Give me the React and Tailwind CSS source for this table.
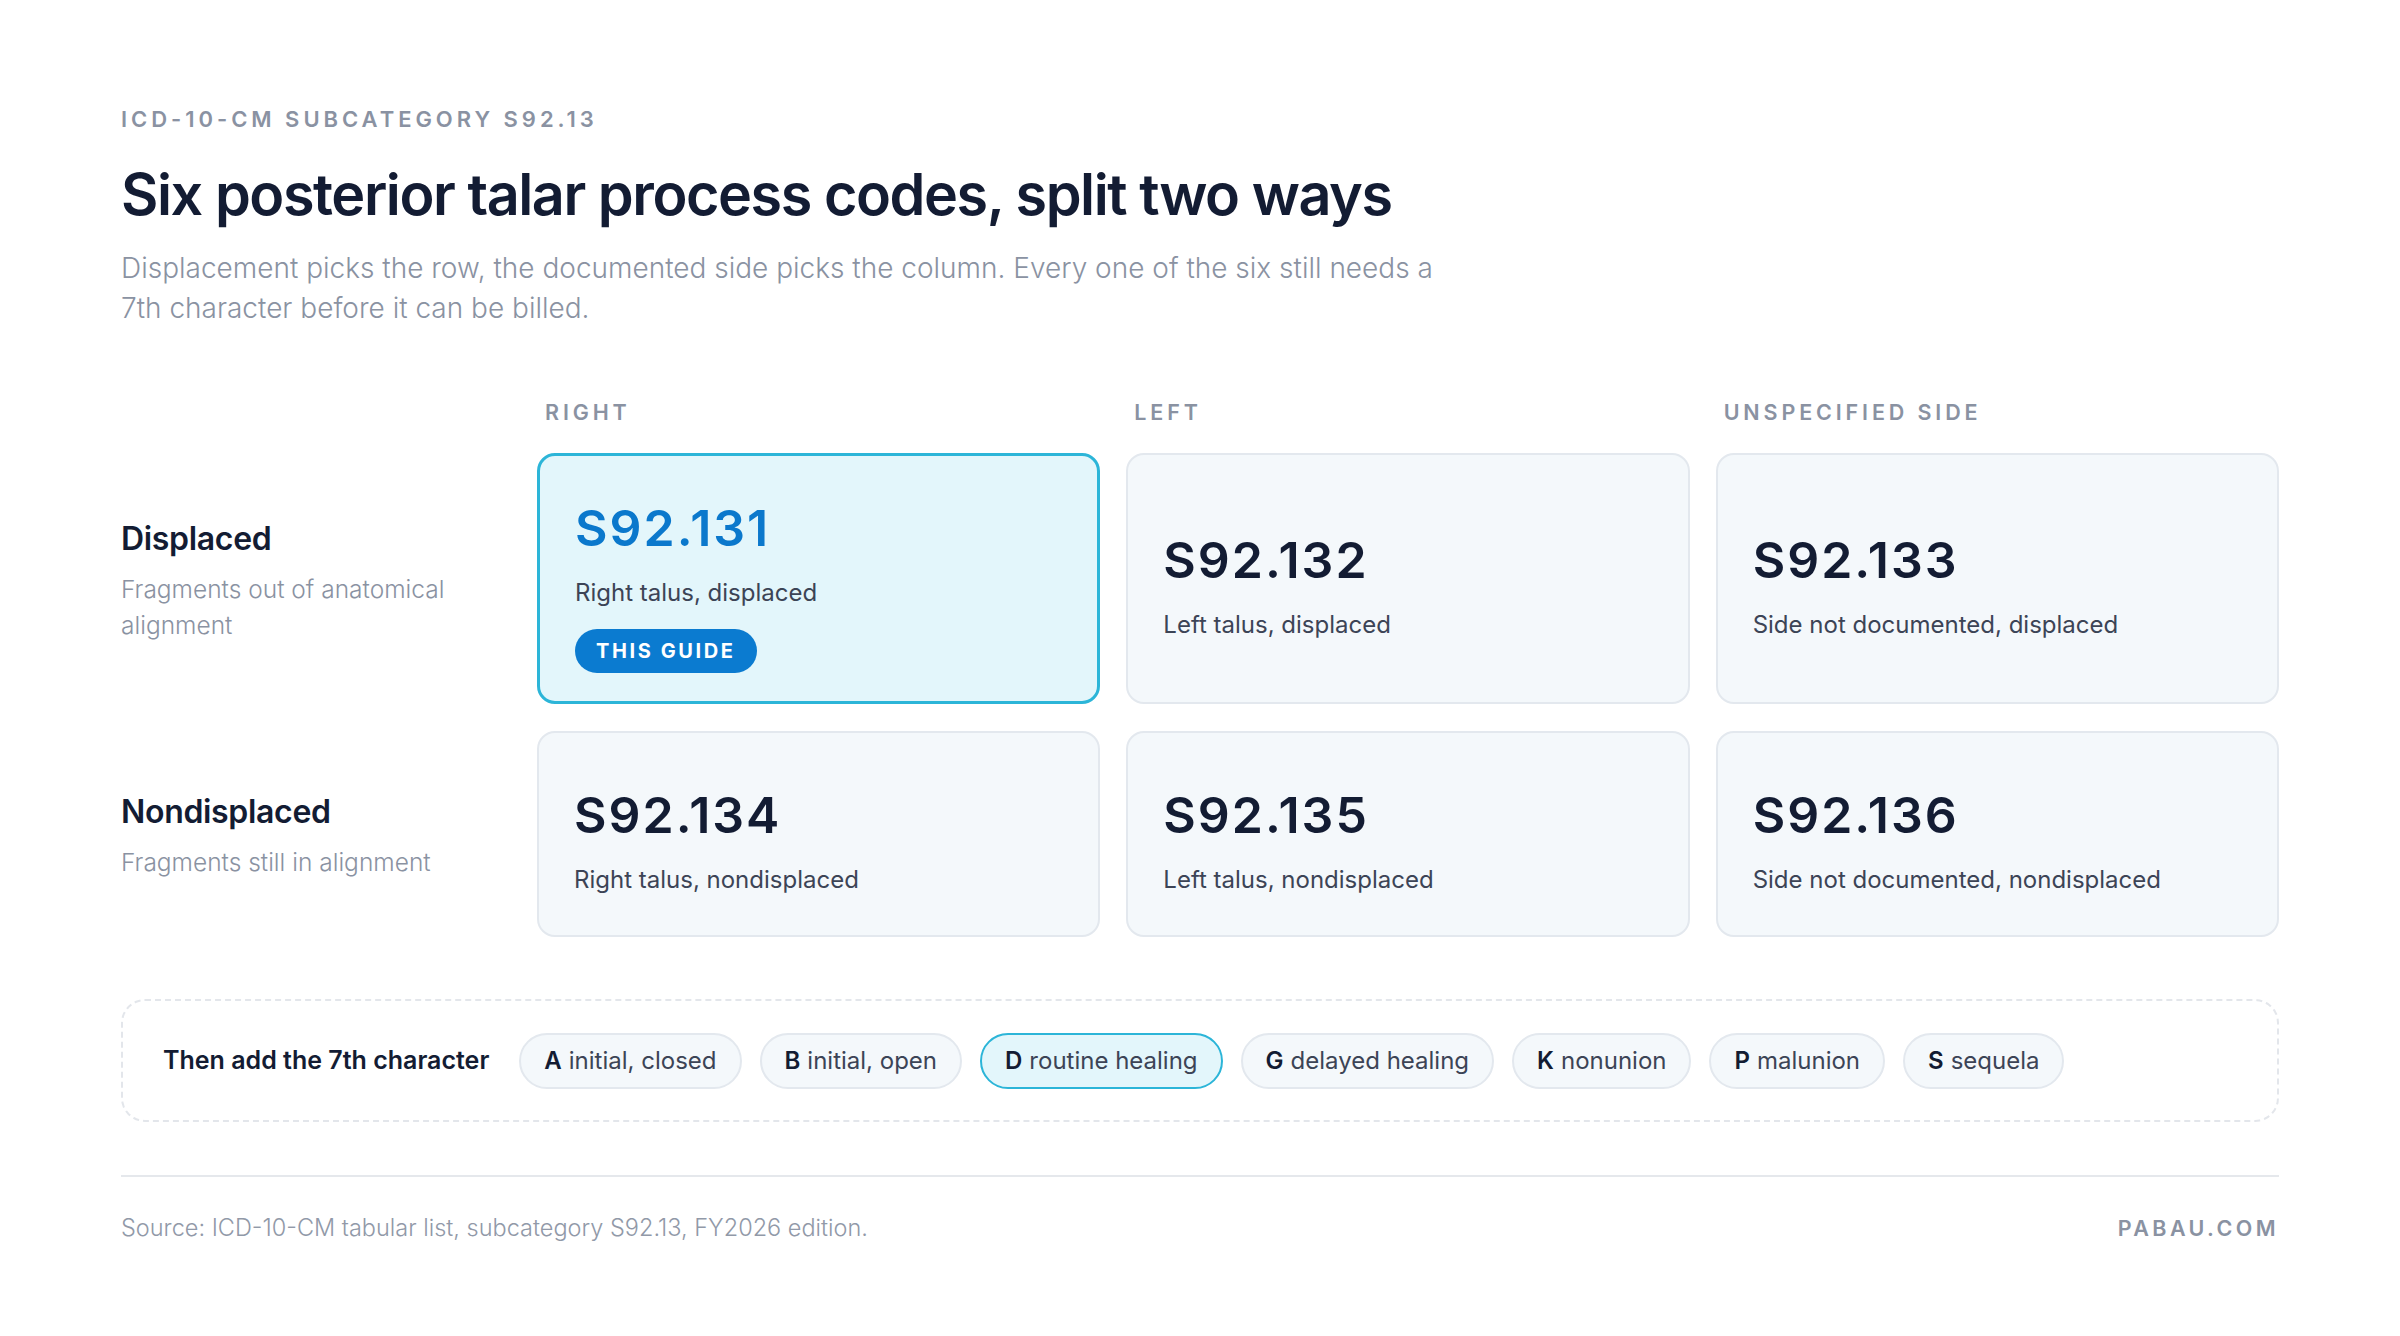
const rows = [
  {
    title: "Displaced",
    note: "Fragments out of anatomical alignment",
    height: "h-[251px]",
    cards: [
      { code: "S92.131", desc: "Right talus, displaced", current: true },
      { code: "S92.132", desc: "Left talus, displaced" },
      { code: "S92.133", desc: "Side not documented, displaced" },
    ],
  },
  {
    title: "Nondisplaced",
    note: "Fragments still in alignment",
    height: "h-[206px]",
    cards: [
      { code: "S92.134", desc: "Right talus, nondisplaced" },
      { code: "S92.135", desc: "Left talus, nondisplaced" },
      { code: "S92.136", desc: "Side not documented, nondisplaced" },
    ],
  },
];

const sevenths = [
  ["A", "initial, closed"],
  ["B", "initial, open"],
  ["D", "routine healing", true],
  ["G", "delayed healing"],
  ["K", "nonunion"],
  ["P", "malunion"],
  ["S", "sequela"],
];

function CodeCard({ code, desc, current, height }) {
  return (
    <div
      className={`${height} flex flex-col justify-center rounded-[18px] px-[35px] pt-[14px] ${
        current
          ? "border-[3px] border-[#2cb5d8] bg-[#e3f6fb]"
          : "border-2 border-[#e3e8ee] bg-[#f4f8fb]"
      }`}
    >
      <div
        className={`text-[50px] font-semibold leading-[58px] tracking-[0.04em] ${
          current ? "text-[#0b78cc]" : "text-[#131c33]"
        }`}
      >
        {code}
      </div>
      <div className="mt-5 text-[24px] leading-[32px] text-[#3c4456]">{desc}</div>
      {current && (
        <div className="mt-5">
          <span className="inline-flex h-[44px] items-center rounded-full bg-[#0b7bd0] px-[21px] text-[20px] font-bold tracking-[0.13em] text-white">
            THIS GUIDE
          </span>
        </div>
      )}
    </div>
  );
}

export default function App() {
  return (
    <div className="min-h-screen bg-white px-[121px] pt-[105px] font-['Inter',sans-serif] text-[#131c33]">
      <p className="text-[22px] font-semibold leading-[28px] tracking-[0.18em] text-[#8a92a2]">
        ICD-10-CM SUBCATEGORY S92.13
      </p>
      <h1 className="mt-[30px] text-[57.5px] font-semibold leading-[62px] tracking-[-0.025em]">
        Six posterior talar process codes, split two ways
      </h1>
      <p className="mt-[23px] max-w-[1345px] text-[28px] font-light leading-[40px] text-[#8a92a2]">
        Displacement picks the row, the documented side picks the column. Every one of the six
        still needs a 7th character before it can be billed.
      </p>

      <div className="mt-[70px] grid grid-cols-[390px_1fr_1fr_1fr] gap-x-[26px] gap-y-[27px]">
        <div className="col-start-2 pl-2 text-[21.5px] font-semibold leading-[28px] tracking-[0.18em] text-[#8a92a2]">
          RIGHT
        </div>
        <div className="pl-2 text-[21.5px] font-semibold leading-[28px] tracking-[0.18em] text-[#8a92a2]">
          LEFT
        </div>
        <div className="pl-2 text-[21.5px] font-semibold leading-[28px] tracking-[0.18em] text-[#8a92a2]">
          UNSPECIFIED SIDE
        </div>

        {rows.map((row) => (
          <div key={row.title} className="contents">
            <div className="flex flex-col justify-center pt-[4px]">
              <div className="text-[32px] font-semibold leading-[40px] tracking-[-0.01em]">
                {row.title}
              </div>
              <div className="mt-3 max-w-[345px] text-[24.5px] font-light leading-[36px] text-[#8a92a2]">
                {row.note}
              </div>
            </div>
            {row.cards.map((c) => (
              <CodeCard key={c.code} {...c} height={row.height} />
            ))}
          </div>
        ))}
      </div>

      <div className="mt-[62px] flex h-[123px] items-center gap-[18px] rounded-[24px] border-2 border-dashed border-[#e3e6eb] pl-[40px]">
        <span className="mr-[12px] text-[25px] font-semibold text-[#131c33]">
          Then add the 7th character
        </span>
        {sevenths.map(([k, label, active]) => (
          <span
            key={k}
            className={`inline-flex h-[56px] items-center gap-[7px] rounded-full border-2 px-[23px] text-[24px] ${
              active ? "border-[#2cb5d8] bg-[#e3f6fb]" : "border-[#e3e8ee] bg-[#f4f8fb]"
            }`}
          >
            <b className="font-semibold text-[#131c33]">{k}</b>
            <span className="text-[#3c4456]">{label}</span>
          </span>
        ))}
      </div>

      <div className="mt-[53px] border-t-2 border-[#e5e8ec] pt-[33px]">
        <div className="flex items-center justify-between">
          <span className="text-[23.5px] font-light text-[#9199a8]">
            Source: ICD-10-CM tabular list, subcategory S92.13, FY2026 edition.
          </span>
          <span className="text-[21.5px] font-semibold tracking-[0.16em] text-[#8a92a2]">
            PABAU.COM
          </span>
        </div>
      </div>
    </div>
  );
}
